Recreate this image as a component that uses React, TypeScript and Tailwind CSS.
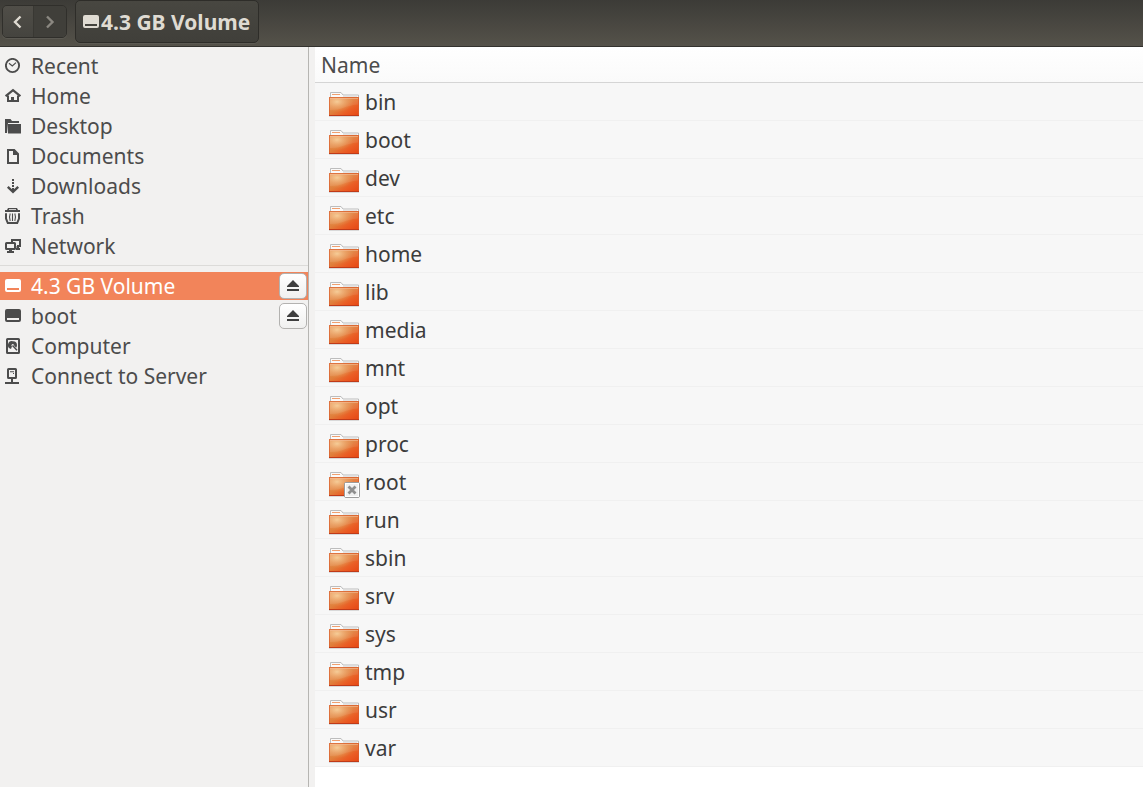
import type { ReactNode } from "react";

function Glyph({ children, className = "" }: { children: ReactNode; className?: string }) {
  return (
    <svg viewBox="0 0 16 16" className={`size-4 shrink-0 ${className}`} fill="currentColor" aria-hidden="true">
      {children}
    </svg>
  );
}

const stroke = { fill: "none", stroke: "currentColor", strokeWidth: 2 };

const icons = {
  recent: (
    <>
      <circle cx="7.5" cy="7.5" r="6.6" {...stroke} strokeWidth={1.9} />
      <path d="M4 5.2 7.3 8 11 4.6" {...stroke} strokeWidth={1.2} />
    </>
  ),
  home: (
    <>
      <path d="M.6 8.2 8 2.2l7.4 6" {...stroke} strokeWidth={2.3} />
      <path d="M2 7.500h2V12h2V9h3v3h3V7.500h2V14H2z" />
    </>
  ),
  folder: (
    <>
      <path d="M0 1h5.5L7 3h7v2H3L2 15H0z" />
      <path d="M3 6h13v9.5H3z" />
    </>
  ),
  document: <path d="M3 2h6.2L13 5.8V15H3z M9 2v4h4" {...stroke} />,
  download: (
    <>
      <path d="M7 1h2v2H7zM7 4h2v2H7zM7 7h2v2H7zM7 10h2v3H7z" />
      <path d="m2.8 8.8 5.2 5 5.2-5" {...stroke} strokeWidth={2.4} />
    </>
  ),
  trash: (
    <>
      <path d="M3 0h9l1 2h2v2H0V2h2z" />
      <path d="M4 1.2h7v.8H4z" fill="#f2f1f0" />
      <path d="M1 5.2v5.3L2.8 15h9.4l1.8-4.5V5.2" {...stroke} />
      <path d="M5.2 5.5Q3.8 9 5.2 13M9.8 5.5Q11.2 9 9.8 13M7.5 5.5V13" {...stroke} strokeWidth={1.1} />
    </>
  ),
  network: (
    <>
      <path d="M7 4V2h8v6h-3" {...stroke} />
      <rect x="1" y="5" width="9" height="6" rx=".5" {...stroke} />
      <path d="M4 11h3v2h2v2H2v-2h2zM11.500 8H14v2h1v2h-4v-2h.5z" />
    </>
  ),
  drive: (
    <path
      fillRule="evenodd"
      d="M2 1h12a2 2 0 0 1 2 2v9a2 2 0 0 1-2 2H2a2 2 0 0 1-2-2V3a2 2 0 0 1 2-2zM2 10V12h12v-2z"
    />
  ),
  disk: (
    <>
      <rect x="2" y="1" width="12" height="14" rx=".6" {...stroke} />
      <path d="M8 3.2a4 4 0 0 1 4 4c0 1-.3 1.800-.8 2.500L9.200 7.800A1.400 1.400 0 1 0 7 8.600L6 11a4 4 0 0 1 2-7.800z" />
      <path d="m7.500 7.500 4.500 4.700" {...stroke} strokeWidth={1.5} />
    </>
  ),
  server: (
    <>
      <rect x="3" y="1" width="8" height="9" rx=".5" {...stroke} />
      <path d="M5 3.300h4v1H5zM8 5h1v1H8zM6 10h2v4h6v2H0v-2h6z" />
    </>
  ),
};

type IconName = keyof typeof icons;
type Place = { label: string; icon: IconName; ejectable?: boolean; active?: boolean };

const places: Place[] = [
  { label: "Recent", icon: "recent" },
  { label: "Home", icon: "home" },
  { label: "Desktop", icon: "folder" },
  { label: "Documents", icon: "document" },
  { label: "Downloads", icon: "download" },
  { label: "Trash", icon: "trash" },
  { label: "Network", icon: "network" },
];

const devices: Place[] = [
  { label: "4.3 GB Volume", icon: "drive", ejectable: true, active: true },
  { label: "boot", icon: "drive", ejectable: true },
  { label: "Computer", icon: "disk" },
  { label: "Connect to Server", icon: "server" },
];

const folders = [
  "bin", "boot", "dev", "etc", "home", "lib", "media", "mnt", "opt",
  "proc", "root", "run", "sbin", "srv", "sys", "tmp", "usr", "var",
];

function PlaceRow({ label, icon, ejectable, active }: Place) {
  return (
    <li className="flex h-[30px] items-center">
      <div className={`flex h-7 w-full items-center pl-[5px] pr-px ${active ? "bg-[#f2845a] text-white" : ""}`}>
        <a href="#" className="flex min-w-0 flex-1 items-center gap-2.5">
          <Glyph>{icons[icon]}</Glyph>
          <span className="whitespace-nowrap">{label}</span>
        </a>
        {ejectable && (
          <button
            aria-label={`Eject ${label}`}
            className="flex h-[26px] w-7 items-center justify-center rounded-[5px] border border-[#b3b2b0] bg-linear-to-b from-white to-[#f0f0ef] text-[#3f3f3f]"
          >
            <Glyph>
              <path d="M8 2 14 8v1H2V8zM2 11h12v2H2z" />
            </Glyph>
          </button>
        )}
      </div>
    </li>
  );
}

function FolderIcon({ locked }: { locked: boolean }) {
  return (
    <svg viewBox="0 0 32 32" className="size-8 shrink-0" aria-hidden="true">
      <path d="M2.5 13V6.5H13l2 2.5h15.5v4" fill="#fafafa" stroke="#bdbdbd" />
      <path d="M4 8.5h8" stroke="#f0a070" />
      <path d="M15 10.5h14" stroke="#e4e4e4" />
      <rect x="1" y="11" width="30" height="19" rx=".6" fill="url(#folder-base)" />
      <rect x="1" y="11" width="30" height="19" rx=".6" fill="url(#folder-glow)" />
      <path d="M2 12h28v6.5Q21 19.500 15 22T2 24z" fill="#fff" fillOpacity=".08" />
      <rect x="1.5" y="11.5" width="29" height="18" fill="none" stroke="#d9602f" strokeOpacity=".7" />
      <path d="M2 12.5h28" stroke="#f5bd96" strokeOpacity=".6" />
      <path d="M1 29.5h30" stroke="#c03a18" />
      <path d="M1 30.5h30" stroke="#000" strokeOpacity=".12" />
      {locked && (
        <>
          <rect x="16.5" y="16.5" width="15" height="15" rx="1.5" fill="#f0f0f0" stroke="#9c9c9c" />
          <rect x="17.5" y="17.5" width="13" height="13" fill="none" stroke="#fff" />
          <path d="m20.500 20.500 7 7m0-7-7 7" stroke="#8f8f8f" strokeWidth="2.8" />
        </>
      )}
    </svg>
  );
}

export default function App() {
  return (
    <div className="flex min-h-screen flex-col bg-[#f2f1f0] font-['Noto_Sans','Open_Sans',sans-serif] text-[21px] leading-7 text-[#4c4c4c]">
      <svg className="absolute size-0" aria-hidden="true">
        <defs>
          <linearGradient id="folder-base" x1="0" y1="0" x2="1" y2="1">
            <stop offset="0" stopColor="#e8975a" />
            <stop offset=".45" stopColor="#e0803c" />
            <stop offset=".7" stopColor="#ea5d24" />
            <stop offset="1" stopColor="#e64512" />
          </linearGradient>
          <radialGradient id="folder-glow" cx=".27" cy=".25" r=".55">
            <stop offset="0" stopColor="#f8d49c" stopOpacity=".85" />
            <stop offset="1" stopColor="#f0a060" stopOpacity="0" />
          </radialGradient>
        </defs>
      </svg>

      <header className="flex h-[47px] items-start gap-2 border-b border-[#33322e] bg-linear-to-b from-[#3c3b37] to-[#55524a] pl-0.5 text-[#dfdbd2]">
        <nav className="mt-[5px] flex h-[33px] w-[65px] overflow-hidden rounded-[5px] border border-[#302f2b] shadow-[0_1px_0_#5c5a53]" aria-label="History">
          <button aria-label="Back" className="flex w-[31px] items-center justify-center border-r border-[#393833] bg-linear-to-b from-[#504e48] to-[#45443f]">
            <Glyph>
              <path d="m10.500 2.500-5.500 5.500 5.500 5.500" {...stroke} strokeWidth={2.4} />
            </Glyph>
          </button>
          <button aria-label="Forward" disabled className="flex flex-1 items-center justify-center bg-[#403f3a] text-[#8b8881]">
            <Glyph>
              <path d="m5 2.500 5.500 5.500-5.500 5.500" {...stroke} strokeWidth={2.4} />
            </Glyph>
          </button>
        </nav>
        <button className="flex h-[43px] items-center gap-0.5 rounded-[5px] border border-[#2e2d29] bg-linear-to-b from-[#484741] to-[#403f3a] px-2 pl-[7px] font-bold shadow-[0_1px_0_#5c5a53]">
          <Glyph>{icons.drive}</Glyph>
          <span className="whitespace-nowrap">4.3 GB Volume</span>
        </button>
      </header>

      <div className="flex flex-1">
        <aside className="w-[309px] shrink-0 border-r border-[#b6b5b2] pt-1">
          <ul>{places.map((p) => <PlaceRow key={p.label} {...p} />)}</ul>
          <hr className="mt-1 mb-[5px] border-[#dcdbd9]" />
          <ul>{devices.map((p) => <PlaceRow key={p.label} {...p} />)}</ul>
        </aside>

        <main className="ml-1.5 min-w-0 flex-1 bg-white">
          <table className="w-full border-separate border-spacing-0">
            <thead>
              <tr>
                <th className="h-9 border-b border-[#d5d5d5] bg-linear-to-b from-white to-[#fafafa] p-0 pl-1.5 text-left font-normal">
                  Name
                </th>
              </tr>
            </thead>
            <tbody className="text-[#3c3c3c]">
              {folders.map((name) => (
                <tr key={name}>
                  <td className="h-[38px] border-b border-[#f0f0f0] bg-[#f7f7f7] p-0 pl-[13px]">
                    <a href="#" className="flex items-center gap-[5px]">
                      <FolderIcon locked={name === "root"} />
                      <span>{name}</span>
                    </a>
                  </td>
                </tr>
              ))}
            </tbody>
          </table>
        </main>
      </div>
    </div>
  );
}
